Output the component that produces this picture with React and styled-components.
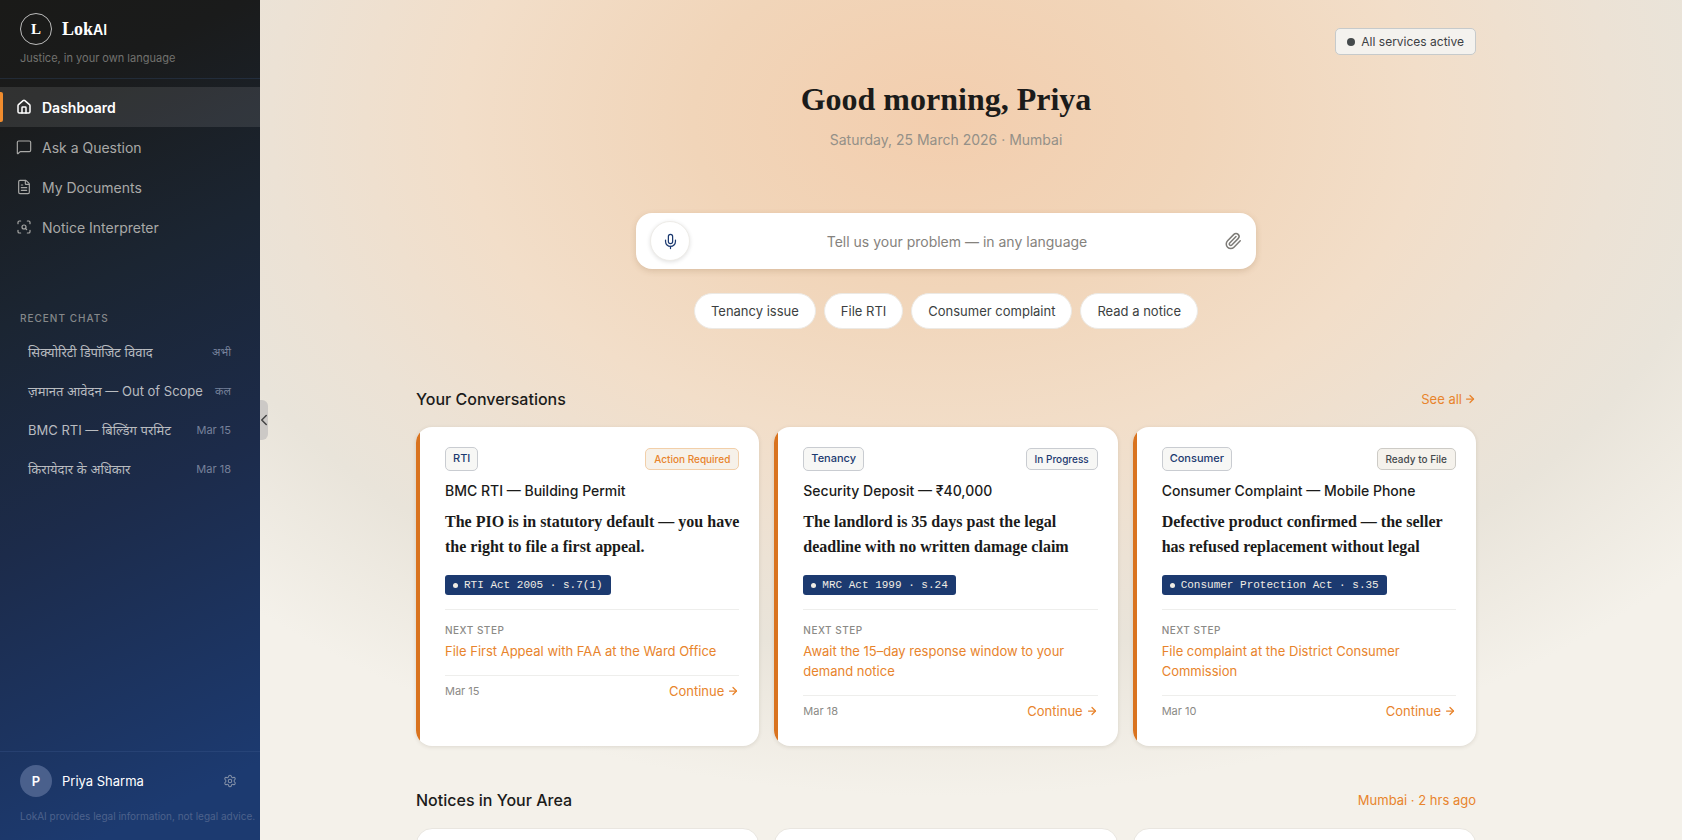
import React, { useState } from 'react'
import styled, { createGlobalStyle, css } from 'styled-components'
import { House, MessageSquare, FileText, ScanSearch, Settings, Mic, Paperclip, ChevronLeft, ArrowRight } from 'lucide-react'

const GlobalStyle = createGlobalStyle`
  *, *::before, *::after { box-sizing: border-box; }
  html, body, #root { height: 100%; }
  body {
    margin: 0;
    font-family: 'Inter', 'Noto Sans', 'Noto Sans Devanagari', sans-serif;
    color: #1b1b1a;
    background: #f4f1ea;
  }
  h1, h2, h3, p, ul { margin: 0; padding: 0; }
  ul { list-style: none; }
  a { color: inherit; text-decoration: none; }
  button { font: inherit; color: inherit; cursor: pointer; }
`

const serif = css`
  font-family: 'Liberation Serif', serif;
  font-weight: 700;
`

const NAV = [
  { label: 'Dashboard', Icon: House },
  { label: 'Ask a Question', Icon: MessageSquare },
  { label: 'My Documents', Icon: FileText },
  { label: 'Notice Interpreter', Icon: ScanSearch }
]

const CHATS = [
  { title: 'सिक्योरिटी डिपॉजिट विवाद', when: 'अभी' },
  { title: 'ज़मानत आवेदन — Out of Scope', when: 'कल' },
  { title: 'BMC RTI — बिल्डिंग परमिट', when: 'Mar 15' },
  { title: 'किरायेदार के अधिकार', when: 'Mar 18' }
]

const PROMPTS = ['Tenancy issue', 'File RTI', 'Consumer complaint', 'Read a notice']

const CONVERSATIONS = [
  {
    tag: 'RTI',
    status: 'Action Required',
    tone: 'urgent',
    title: 'BMC RTI — Building Permit',
    lines: ['The PIO is in statutory default — you have', 'the right to file a first appeal.'],
    law: 'RTI Act 2005 · s.7(1)',
    next: ['File First Appeal with FAA at the Ward Office'],
    date: 'Mar 15'
  },
  {
    tag: 'Tenancy',
    status: 'In Progress',
    tone: 'progress',
    title: 'Security Deposit — ₹40,000',
    lines: ['The landlord is 35 days past the legal', 'deadline with no written damage claim'],
    law: 'MRC Act 1999 · s.24',
    next: ['Await the 15–day response window to your', 'demand notice'],
    date: 'Mar 18'
  },
  {
    tag: 'Consumer',
    status: 'Ready to File',
    tone: 'ready',
    title: 'Consumer Complaint — Mobile Phone',
    lines: ['Defective product confirmed — the seller', 'has refused replacement without legal'],
    law: 'Consumer Protection Act · s.35',
    next: ['File complaint at the District Consumer', 'Commission'],
    date: 'Mar 10'
  }
]

export default () => {
  const [problem, setProblem] = useState('')

  return (
    <>
      <GlobalStyle />
      <Shell>
        <Sidebar>
          <Brand>
            <BrandRow>
              <BrandMark>L</BrandMark>
              <BrandName>Lok<span>AI</span></BrandName>
            </BrandRow>
            <Tagline>Justice, in your own language</Tagline>
          </Brand>
          <nav aria-label='Main'>
            {NAV.map(({ label, Icon }, i) => (
              <NavLink key={label} href='#' $active={i === 0}>
                <Icon size={16} strokeWidth={i === 0 ? 2.25 : 1.75} />
                {label}
              </NavLink>
            ))}
          </nav>
          <Recent>
            <RecentTitle>RECENT CHATS</RecentTitle>
            <ul>
              {CHATS.map(chat => (
                <li key={chat.title}>
                  <ChatLink href='#'>
                    <span>{chat.title}</span>
                    <ChatDate>{chat.when}</ChatDate>
                  </ChatLink>
                </li>
              ))}
            </ul>
          </Recent>
          <SidebarFooter>
            <UserRow>
              <Avatar>P</Avatar>
              <UserName>Priya Sharma</UserName>
              <IconButton aria-label='Settings'><Settings size={14} strokeWidth={1.75} /></IconButton>
            </UserRow>
            <Disclaimer>LokAI provides legal information, not legal advice.</Disclaimer>
          </SidebarFooter>
          <CollapseButton aria-label='Collapse sidebar'><ChevronLeft size={18} /></CollapseButton>
        </Sidebar>

        <Main>
          <Content>
            <TopBar>
              <ServiceStatus><StatusDot />All services active</ServiceStatus>
            </TopBar>
            <Greeting>Good morning, Priya</Greeting>
            <DateLine>Saturday, 25 March 2026 · Mumbai</DateLine>
            <SearchBox>
              <MicButton type='button' aria-label='Speak'><Mic size={17} strokeWidth={1.75} /></MicButton>
              <SearchInput
                aria-label='Your problem'
                placeholder='Tell us your problem — in any language'
                value={problem}
                onChange={e => setProblem(e.target.value)}
              />
              <IconButton type='button' aria-label='Attach a file' $muted><Paperclip size={18} /></IconButton>
            </SearchBox>
            <Prompts>
              {PROMPTS.map(p => <Prompt key={p}>{p}</Prompt>)}
            </Prompts>

            <SectionHead>
              <h2>Your Conversations</h2>
              <SectionLink href='#'>See all <ArrowRight size={12} strokeWidth={2.5} /></SectionLink>
            </SectionHead>
            <Cards>
              {CONVERSATIONS.map(c => (
                <Card key={c.tag}>
                  <CardTop>
                    <Tag>{c.tag}</Tag>
                    <Status $tone={c.tone}>{c.status}</Status>
                  </CardTop>
                  <CardTitle>{c.title}</CardTitle>
                  <Finding>{c.lines.map(l => <span key={l}>{l}</span>)}</Finding>
                  <Law><LawDot />{c.law}</Law>
                  <NextStep>
                    <NextLabel>NEXT STEP</NextLabel>
                    <NextText>{c.next.map(l => <span key={l}>{l}</span>)}</NextText>
                  </NextStep>
                  <CardFoot>
                    <span>{c.date}</span>
                    <Continue href='#'>Continue <ArrowRight size={12} strokeWidth={2.5} /></Continue>
                  </CardFoot>
                </Card>
              ))}
            </Cards>

            <SectionHead>
              <h2>Notices in Your Area</h2>
              <SectionLink as='span'>Mumbai · 2 hrs ago</SectionLink>
            </SectionHead>
            <Cards>
              <NoticeCard />
              <NoticeCard />
              <NoticeCard />
            </Cards>
          </Content>
        </Main>
      </Shell>
    </>
  )
}

const Shell = styled.div`
  display: flex;
  height: 100vh;
`

const Sidebar = styled.aside`
  position: relative;
  display: flex;
  flex-direction: column;
  flex: 0 0 260px;
  color: #fff;
  background: linear-gradient(155deg, #1a1a18 0%, #1a1b1b 12%, #1b2532 34%, #1c2b4a 58%, #1c3a70 92%);
`

const Brand = styled.div`
  padding: 13px 20px;
  border-bottom: 1px solid rgba(60, 90, 140, 0.25);
  margin-bottom: 8px;
`

const BrandRow = styled.div`
  display: flex;
  align-items: center;
  gap: 10px;
`

const BrandMark = styled.span`
  ${serif}
  display: grid;
  place-items: center;
  width: 32px;
  height: 32px;
  border: 1px solid rgba(255, 255, 255, 0.7);
  border-radius: 50%;
  font-size: 15px;
`

const BrandName = styled.span`
  ${serif}
  font-size: 18px;

  span {
    font-family: 'Inter', sans-serif;
    font-size: 14px;
    font-weight: 600;
  }
`

const Tagline = styled.p`
  margin-top: 6px;
  font-size: 11px;
  line-height: 14px;
  color: #72726f;
`

const NavLink = styled.a`
  position: relative;
  display: flex;
  align-items: center;
  gap: 10px;
  height: 40px;
  padding: 0 16px;
  font-size: 14px;
  font-weight: ${p => (p.$active ? 600 : 400)};
  color: ${p => (p.$active ? '#fff' : '#a9a9a7')};
  background: ${p => (p.$active ? 'rgba(255, 255, 255, 0.1)' : 'none')};

  ${p => p.$active && css`
    &::before {
      content: '';
      position: absolute;
      left: 0;
      top: 5px;
      bottom: 5px;
      width: 3px;
      border-radius: 0 2px 2px 0;
      background: #f08c2e;
    }
  `}
`

const Recent = styled.section`
  margin-top: 65px;
`

const RecentTitle = styled.h2`
  padding: 0 20px;
  margin-bottom: 8px;
  font-size: 10px;
  line-height: 12px;
  font-weight: 500;
  letter-spacing: 1px;
  color: #85888a;
`

const ChatLink = styled.a`
  display: flex;
  align-items: center;
  justify-content: space-between;
  height: 39px;
  padding: 0 29px 0 28px;
  font-size: 13px;
  white-space: nowrap;
  color: #b9bcc0;
`

const ChatDate = styled.span`
  font-size: 11px;
  color: #76819a;
`

const SidebarFooter = styled.footer`
  margin-top: auto;
  padding: 13px 0 17px 20px;
  border-top: 1px solid rgba(60, 90, 140, 0.35);
`

const UserRow = styled.div`
  display: flex;
  align-items: center;
  gap: 10px;
  padding-right: 23px;
`

const Avatar = styled.span`
  display: grid;
  place-items: center;
  width: 32px;
  height: 32px;
  border-radius: 50%;
  font-size: 13px;
  font-weight: 600;
  background: #4a608c;
`

const UserName = styled.span`
  flex: 1;
  font-size: 13px;
`

const IconButton = styled.button`
  display: grid;
  place-items: center;
  padding: 0;
  border: 0;
  background: none;
  color: ${p => (p.$muted ? '#7d7b77' : '#8491a8')};
`

const Disclaimer = styled.p`
  margin-top: 12px;
  font-size: 10px;
  line-height: 14px;
  white-space: nowrap;
  color: #4d628c;
`

const CollapseButton = styled.button`
  position: absolute;
  left: 100%;
  top: 400px;
  display: flex;
  align-items: center;
  justify-content: center;
  width: 8px;
  height: 40px;
  padding: 0;
  border: 0;
  border-radius: 0 6px 6px 0;
  color: #444;
  background: #ccc9c6;

  svg { flex-shrink: 0; }
`

const Main = styled.main`
  flex: 1;
  min-width: 0;
  overflow: hidden;
  padding: 28px 50px 0 0;
  background: radial-gradient(
    ellipse 960px 650px at 48% 120px,
    #f3ceae 0%,
    #f1d5b9 26%,
    #f2dec9 50%,
    #ece2d5 70%,
    #e9e4da 82%,
    #f4f1ea 104%
  );
`

const Content = styled.div`
  display: flex;
  flex-direction: column;
  width: 100%;
  max-width: 1060px;
  margin: 0 auto;
`

const TopBar = styled.div`
  display: flex;
  justify-content: flex-end;
`

const ServiceStatus = styled.div`
  display: flex;
  align-items: center;
  gap: 6px;
  height: 27px;
  padding: 0 11px;
  border: 1px solid #c6cacb;
  border-radius: 5px;
  font-size: 12px;
  color: #3c4043;
  background: #f4f2ee;
`

const StatusDot = styled.span`
  width: 8px;
  height: 8px;
  border-radius: 50%;
  background: #454a4c;
`

const Greeting = styled.h1`
  ${serif}
  margin-top: 24px;
  font-size: 32px;
  line-height: 40px;
  text-align: center;
`

const DateLine = styled.p`
  margin-top: 11px;
  font-size: 14px;
  line-height: 20px;
  text-align: center;
  color: #949088;
`

const SearchBox = styled.form`
  display: flex;
  align-items: center;
  align-self: center;
  width: 620px;
  max-width: 100%;
  height: 56px;
  margin-top: 63px;
  padding: 0 14px;
  border-radius: 16px;
  background: #fff;
  box-shadow: 0 2px 6px rgba(120, 80, 40, 0.2);
`

const MicButton = styled.button`
  display: grid;
  place-items: center;
  width: 40px;
  height: 40px;
  padding: 0;
  border: 1px solid #eeece8;
  border-radius: 50%;
  color: #1c3a70;
  background: #fff;
  box-shadow: 0 1px 4px rgba(0, 0, 0, 0.12);
`

const SearchInput = styled.input`
  flex: 1;
  min-width: 0;
  border: 0;
  outline: 0;
  font: inherit;
  font-size: 14px;
  text-align: center;
  background: none;

  &::placeholder {
    color: #85827d;
    opacity: 1;
  }
`

const Prompts = styled.div`
  display: flex;
  flex-wrap: wrap;
  justify-content: center;
  gap: 8px;
  margin-top: 24px;
`

const Prompt = styled.button`
  height: 36px;
  padding: 0 16px;
  border: 1px solid #ece9e4;
  border-radius: 18px;
  font-size: 13px;
  color: #3c3f41;
  background: #fff;
`

const Cards = styled.div`
  display: grid;
  grid-template-columns: repeat(3, minmax(0, 1fr));
  gap: 15px;
`

const SectionHead = styled.header`
  display: flex;
  align-items: center;
  justify-content: space-between;
  height: 24px;
  margin-top: 58px;
  margin-bottom: 16px;

  h2 {
    font-size: 16px;
    font-weight: 500;
  }

  ${Cards} + & {
    margin-top: 42px;
  }
`

const SectionLink = styled.a`
  display: inline-flex;
  align-items: center;
  gap: 2px;
  font-size: 13px;
  color: #e8842c;
`

const Card = styled.article`
  position: relative;
  display: flex;
  flex-direction: column;
  min-height: 319px;
  padding: 20px 20px 23px 29px;
  border-radius: 16px;
  overflow: hidden;
  background: #fff;
  box-shadow: 0 1px 4px rgba(60, 40, 20, 0.12);

  &::before {
    content: '';
    position: absolute;
    left: 0;
    top: 0;
    bottom: 0;
    width: 4px;
    background: #d9731f;
  }
`

const NoticeCard = styled.article`
  min-height: 160px;
  border: 1px solid #e9e6e0;
  border-radius: 16px;
  background: #fff;
`

const CardTop = styled.div`
  display: flex;
  align-items: center;
  justify-content: space-between;
`

const Tag = styled.span`
  height: 24px;
  padding: 0 7px;
  border: 1px solid #c9ccd1;
  border-radius: 5px;
  font-size: 11px;
  line-height: 21px;
  font-weight: 500;
  color: #1c3a70;
  background: #f7f7f5;
`

const TONES = {
  urgent: css`color: #e8842c; border-color: #f2cfa9; background: #f6f1e9;`,
  progress: css`color: #1c3a70; border-color: #c9ccd1; background: #f7f7f5;`,
  ready: css`color: #454a4c; border-color: #cdcbc6; background: #f5f2ec;`
}

const Status = styled.span`
  height: 22px;
  padding: 0 8px;
  border: 1px solid;
  border-radius: 5px;
  font-size: 10px;
  line-height: 21px;
  font-weight: 500;
  ${p => TONES[p.$tone]}
`

const CardTitle = styled.h3`
  margin-top: 10px;
  font-size: 14px;
  line-height: 20px;
  font-weight: 500;
`

const Finding = styled.p`
  ${serif}
  margin-top: 8px;
  font-size: 16px;
  line-height: 25px;
  white-space: nowrap;

  span { display: block; }
`

const Law = styled.span`
  display: flex;
  align-items: center;
  align-self: flex-start;
  gap: 6px;
  height: 20px;
  margin-top: 16px;
  padding: 0 8px;
  border-radius: 3px;
  font-family: 'Liberation Mono', monospace;
  font-size: 11px;
  color: #f0ece4;
  background: #1c3a70;
`

const LawDot = styled.i`
  width: 5px;
  height: 5px;
  border-radius: 50%;
  background: currentColor;
`

const NextStep = styled.div`
  margin-top: 14px;
  padding-top: 13px;
  border-top: 1px solid #eeeeec;
`

const NextLabel = styled.p`
  font-size: 10px;
  line-height: 14px;
  font-weight: 500;
  letter-spacing: 0.5px;
  color: #8b8a86;
`

const NextText = styled.p`
  margin-top: 4px;
  font-size: 13px;
  line-height: 20px;
  white-space: nowrap;
  color: #e8842c;

  span { display: block; }
`

const CardFoot = styled.div`
  display: flex;
  align-items: center;
  justify-content: space-between;
  margin-top: 14px;
  padding-top: 5px;
  border-top: 1px solid #eeeeec;
  font-size: 11px;
  line-height: 20px;
  color: #8b8a86;
`

const Continue = styled.a`
  display: inline-flex;
  align-items: center;
  gap: 3px;
  font-size: 13px;
  color: #e8842c;
`
